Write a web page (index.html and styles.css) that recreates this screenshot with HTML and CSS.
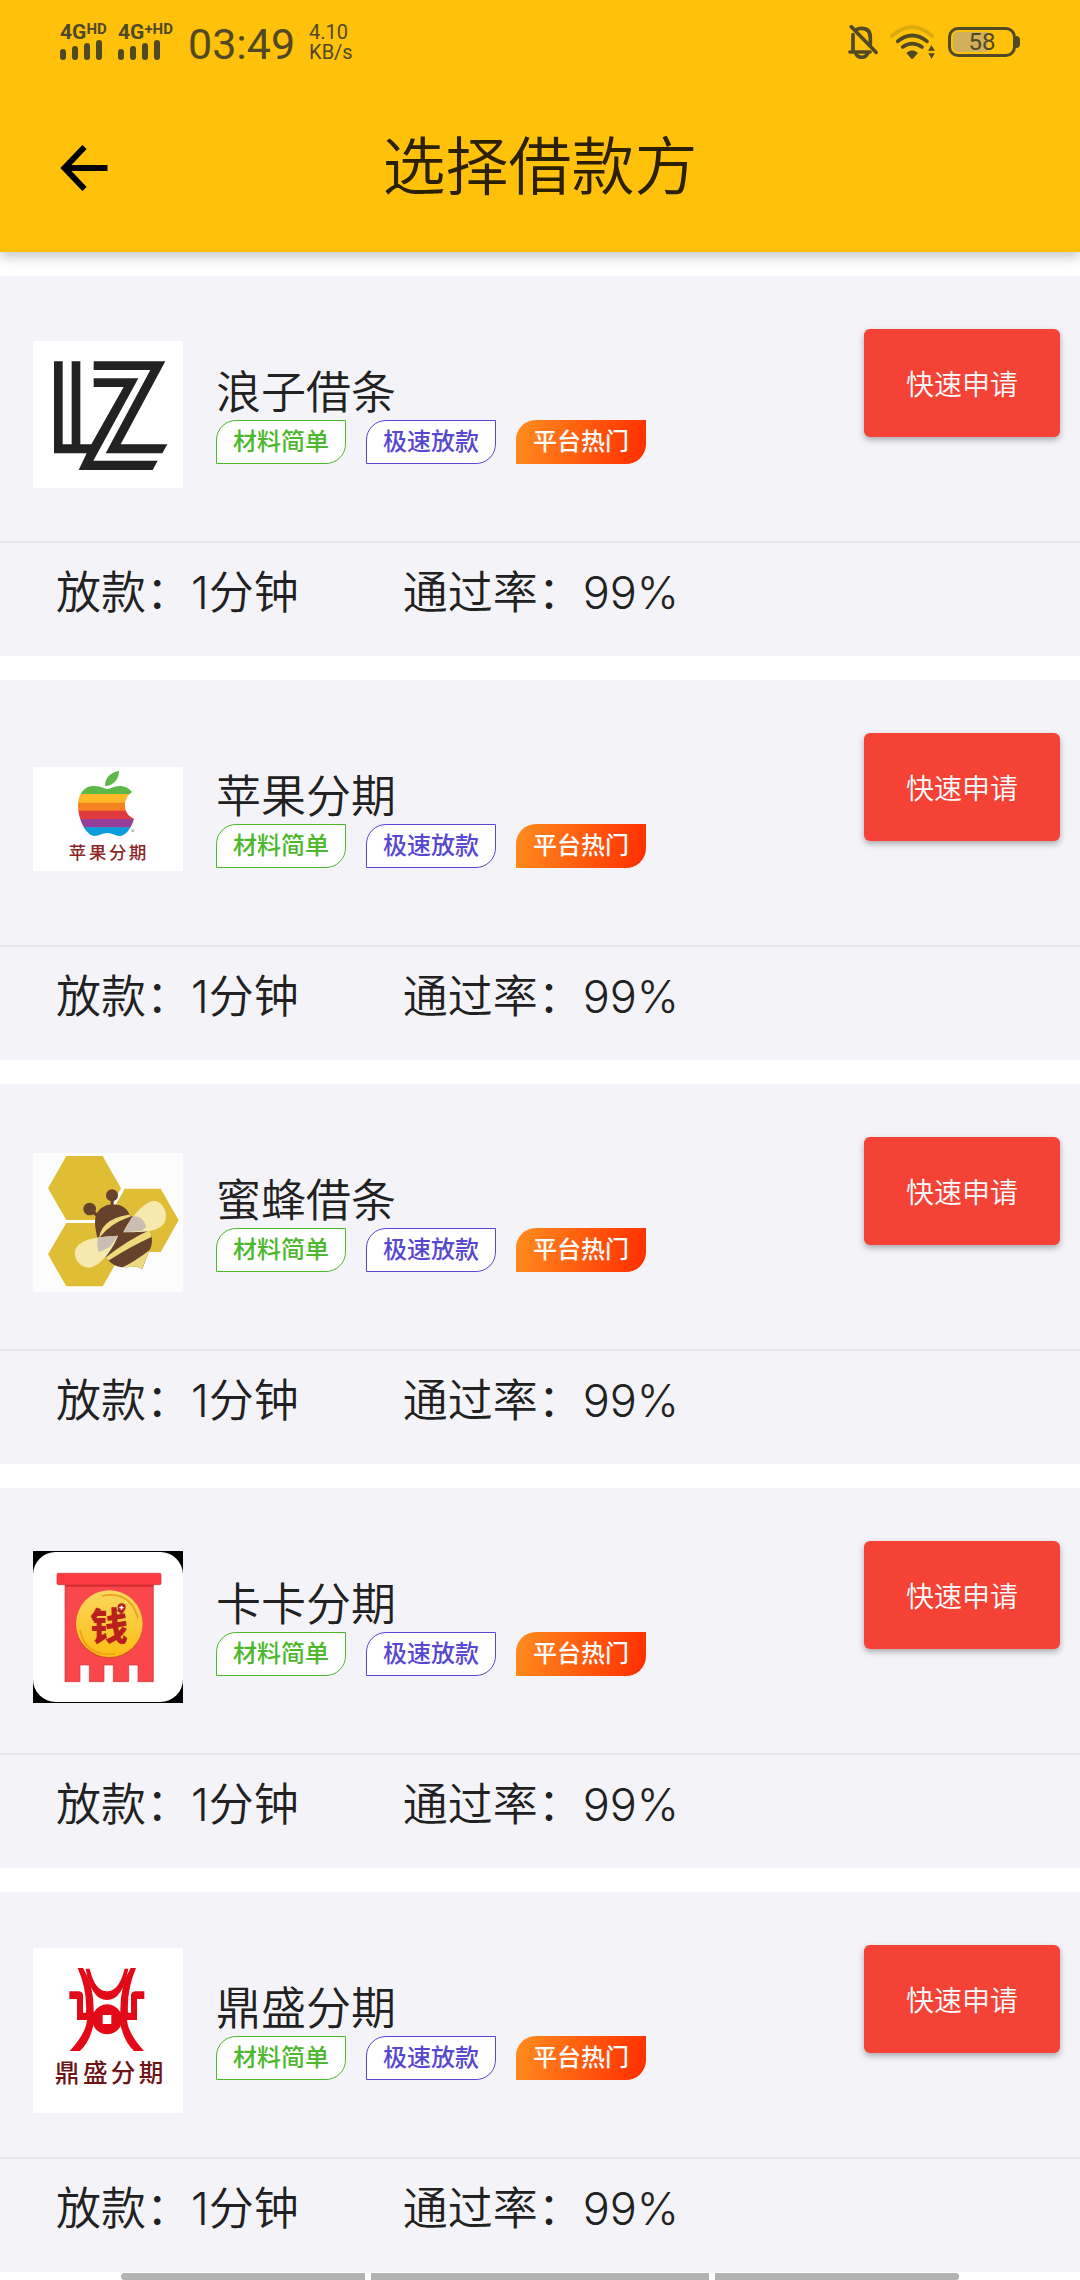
FILE: index.html
```html
<!DOCTYPE html>
<html lang="zh-CN">
  <head>
    <meta charset="UTF-8" />
    <meta name="viewport" content="width=device-width, initial-scale=1.0" />
    <title>选择借款方</title>
    <link rel="stylesheet" href="styles.css">
  </head>
  <body>
    <header class="header">
      <div class="status-bar">
        <div class="status-left">
          <div class="signal">
            <span class="network">4G<sup>HD</sup></span>
            <svg class="bars" viewBox="0 0 42 20"><path d="M3 12v5M15 9v8M27 6v11M39 3v14" /></svg>
          </div>
          <div class="signal">
            <span class="network">4G<sup>+HD</sup></span>
            <svg class="bars" viewBox="0 0 42 20"><path d="M3 12v5M15 9v8M27 6v11M39 3v14" /></svg>
          </div>
          <time class="clock">03:49</time>
          <div class="speed"><span>4.10</span><span>KB/s</span></div>
        </div>
        <div class="status-right">
          <svg class="icon-bell" viewBox="895 75 88 102" fill="none" stroke="#514824" stroke-width="11" stroke-linecap="round">
            <path d="M909 150v-46M917 90q8-5 18-5 26 0 26 28v20M900 156h60" />
            <path d="M918 162q5 10 17 10t17-10" />
            <path d="M904 80l74 77" />
          </svg>
          <svg class="icon-wifi" viewBox="1015 72 138 105" fill="none" stroke="#514824" stroke-width="11" stroke-linecap="round">
            <path d="M1021 105q60-53 120 0" opacity="0.2" />
            <path d="M1038 121q43-35 88 0M1053 138q28-20 58 0" />
            <path d="M1064 156q17-16 35 0l-15 17h-5z" fill="#514824" stroke="none" />
            <path d="M1129 149l10-16 11 16zM1130 157h19l-9 17z" fill="#514824" stroke="none" />
          </svg>
          <div class="battery"><span>58</span></div>
        </div>
      </div>
      <div class="app-bar">
        <a class="back" href="#" aria-label="返回">
          <svg viewBox="0 0 47 48"><path d="M24 3L4 24l20 21M4 24h43" /></svg>
        </a>
        <h1 class="title">选择借款方</h1>
      </div>
    </header>

    <main>
      <ul class="loan-list">
        <li class="loan">
          <div class="loan-main">
            <svg class="logo" viewBox="99 63 450 441">
              <path fill="#fff" d="M99 63h450v441H99z" />
              <g fill="#222">
                <path d="M162 124h26v249h27V124h26v249h33l97-172h-90v-26h134L280 422h193l-15 28H236l24-50h-98z" />
                <path d="M281 124h215L362 373h140l-15 27H317l134-250H281z" />
              </g>
            </svg>
            <div class="info">
              <h2 class="name">浪子借条</h2>
              <div class="tags">
                <span class="tag tag-green">材料简单</span>
                <span class="tag tag-purple">极速放款</span>
                <span class="tag tag-hot">平台热门</span>
              </div>
            </div>
            <button class="apply" type="button">快速申请</button>
          </div>
          <div class="stats"><span>放款：1分钟</span><span>通过率：99%</span></div>
        </li>

        <li class="loan">
          <div class="loan-main">
            <svg class="logo" viewBox="99 81 450 312">
              <clipPath id="apple">
                <path d="M320 147C303 141 292 137 278 138C250 140 234 165 234 196C234 238 258 288 284 288C299 288 305 279 322 279C338 279 345 288 358 288C378 288 395 262 402 236C385 230 375 215 375 196C375 178 384 165 396 156C386 143 372 138 358 138C343 138 332 147 320 147z" />
              </clipPath>
              <path fill="#fff" d="M99 81h450v312H99z" />
              <g clip-path="url(#apple)">
                <path fill="#5db947" d="M230 130h180v33H230z" />
                <path fill="#fdb827" d="M230 162h180v27H230z" />
                <path fill="#f58220" d="M230 188h180v25H230z" />
                <path fill="#e03a3e" d="M230 212h180v26H230z" />
                <path fill="#963d97" d="M230 237h180v26H230z" />
                <path fill="#0b9ddc" d="M230 262h180v28H230z" />
              </g>
              <path fill="#5db947" d="M357 93C334 96 314 113 315 138C340 138 358 116 357 93z" />
              <text class="logo-text" x="393" y="287" font-size="22" fill="#999">®</text>
              <text class="logo-text" x="206 267 327 387" y="358" font-size="52" fill="#8c2626">苹果分期</text>
            </svg>
            <div class="info">
              <h2 class="name">苹果分期</h2>
              <div class="tags">
                <span class="tag tag-green">材料简单</span>
                <span class="tag tag-purple">极速放款</span>
                <span class="tag tag-hot">平台热门</span>
              </div>
            </div>
            <button class="apply" type="button">快速申请</button>
          </div>
          <div class="stats"><span>放款：1分钟</span><span>通过率：99%</span></div>
        </li>

        <li class="loan">
          <div class="loan-main">
            <svg class="logo" viewBox="99 69 450 417">
              <clipPath id="bee">
                <path d="M285 275C285 240 312 223 340 223C365 223 382 235 390 257C425 262 456 295 456 330C456 345 452 355 447 364L427 417L412 410L365 412C335 408 315 385 295 345C292 315 285 300 285 275z" />
              </clipPath>
              <path fill="#fcfcfc" d="M99 69h450v417H99z" />
              <g fill="#dfbd35">
                <path d="M199 78h109l55 97-55 95H199l-55-95z" />
                <path d="M370 176h112l54 95-54 95H370l-54-95z" />
                <path d="M199 279h109l55 94-55 96H199l-55-96z" />
              </g>
              <path d="M370 176l-54 95" stroke="#fcfcfc" stroke-width="8" />
              <g fill="#66422d">
                <circle cx="336" cy="196" r="18" />
                <circle cx="269" cy="237" r="19" />
                <path d="M332 208h9v22h-9zM280 240l18 14-7 8-18-14z" />
              </g>
              <g clip-path="url(#bee)">
                <path fill="#66422d" d="M270 210h200v220H270z" />
                <path fill="#edda7c" d="M297 325Q305 258 410 252L386 262Q335 280 303 317z" />
                <path fill="#edda7c" d="M310 388Q380 330 460 295L456 320Q390 350 325 392z" />
                <path fill="#edda7c" d="M350 420Q400 400 462 350V430z" />
              </g>
              <path fill="#f5e9ae" d="M370 307C390 265 435 210 465 213C490 217 505 250 495 275C480 307 425 306 370 307z" />
              <path fill="#f5e9ae" d="M354 317C340 355 300 412 265 413C235 410 218 380 227 357C240 325 300 320 354 317z" />
              <path fill="#cbbdb4" d="M370 307L396 260Q425 252 439 290L425 303z" />
              <path fill="#cbbdb4" d="M354 317L295 322Q287 340 297 367L330 351z" />
            </svg>
            <div class="info">
              <h2 class="name">蜜蜂借条</h2>
              <div class="tags">
                <span class="tag tag-green">材料简单</span>
                <span class="tag tag-purple">极速放款</span>
                <span class="tag tag-hot">平台热门</span>
              </div>
            </div>
            <button class="apply" type="button">快速申请</button>
          </div>
          <div class="stats"><span>放款：1分钟</span><span>通过率：99%</span></div>
        </li>

        <li class="loan">
          <div class="loan-main">
            <svg class="logo" viewBox="99 63 450 456">
              <linearGradient id="coin" x1="0" y1="0" x2="0" y2="1">
                <stop offset="0" stop-color="#fbd75e" />
                <stop offset="1" stop-color="#fbbd12" />
              </linearGradient>
              <path d="M99 63h450v456H99z" />
              <rect x="99" y="66" width="450" height="450" rx="68" fill="#fff" />
              <path fill="#f9474b" stroke="#d93137" stroke-width="2" d="M195 160h265v295h-46v-50h-28v50h-46v-50h-28v50h-44v-50h-28v50h-45z" />
              <path fill="#d42a31" d="M195 164h265v6H195z" />
              <rect x="171" y="130" width="312" height="34" rx="4" fill="#fb3b40" stroke="#d93137" stroke-width="2" />
              <circle cx="328" cy="285" r="100" fill="#d5502a" />
              <circle cx="328" cy="281" r="100" fill="url(#coin)" />
              <path fill="none" stroke="#eea11b" stroke-width="5" d="M305 198Q390 180 414 265M240 300Q255 380 345 372" />
              <text class="logo-text coin-text" x="270" y="330" font-size="114" fill="#b91f1c">钱</text>
              <circle cx="365" cy="232" r="12" fill="#b91f1c" />
              <path fill="#fff" d="M362 227h5v4h4v4h-4v4h-5v-4h-4v-4h4z" />
            </svg>
            <div class="info">
              <h2 class="name">卡卡分期</h2>
              <div class="tags">
                <span class="tag tag-green">材料简单</span>
                <span class="tag tag-purple">极速放款</span>
                <span class="tag tag-hot">平台热门</span>
              </div>
            </div>
            <button class="apply" type="button">快速申请</button>
          </div>
          <div class="stats"><span>放款：1分钟</span><span>通过率：99%</span></div>
        </li>

        <li class="loan">
          <div class="loan-main">
            <svg class="logo" viewBox="99 54 450 495">
              <path fill="#fff" d="M99 54h450v495H99z" />
              <g fill="#e20a17">
                <path d="M233 114h16Q282 165 281 245L285 262Q275 330 240 363H209Q258 310 261 270H231V207H208V184H237Q249 185 249 198V248H258Q262 180 233 114z" />
                <path d="M408 114h-16Q360 165 361 245L357 262Q367 330 402 363H432Q384 310 381 270H411V207H433V184H405Q393 185 393 198V248H384Q380 180 408 114z" />
                <path d="M257 116h12Q285 184 321 184T374 116h11Q368 210 321 210T257 116z" />
                <path fill-rule="evenodd" d="M321 223a45 45 0 1 0 1 0zM308 255h26v27h-26z" />
              </g>
              <text class="logo-text" x="164 249 332 416" y="455" font-size="74" fill="#6e1517">鼎盛分期</text>
            </svg>
            <div class="info">
              <h2 class="name">鼎盛分期</h2>
              <div class="tags">
                <span class="tag tag-green">材料简单</span>
                <span class="tag tag-purple">极速放款</span>
                <span class="tag tag-hot">平台热门</span>
              </div>
            </div>
            <button class="apply" type="button">快速申请</button>
          </div>
          <div class="stats"><span>放款：1分钟</span><span>通过率：99%</span></div>
        </li>
      </ul>
    </main>

    <div class="gesture-bar"><i></i><i class="wide"></i><i></i></div>
  </body>
</html>
```
FILE: styles.css
```css
* {
  margin: 0;
  padding: 0;
  box-sizing: border-box;
}

body {
  font-family: Inter, "Noto Sans CJK SC", sans-serif;
  font-weight: 350;
  color: #212121;
  background: #fff;
}

/* Header */
.header {
  position: relative;
  background: #ffc10a;
  box-shadow: 0 4px 12px rgba(0, 0, 0, 0.25);
}

.status-bar {
  display: flex;
  justify-content: space-between;
  align-items: center;
  height: 84px;
  padding: 0 60px;
  font-family: Roboto, sans-serif;
  font-weight: 400;
  color: #514824;
}

.status-left,
.status-right {
  display: flex;
  align-items: center;
}

.signal {
  width: 58px;
}

.network {
  display: flex;
  align-items: flex-start;
  height: 16px;
  font-size: 21px;
  font-weight: 700;
  line-height: 16px;
}

.network sup {
  font-size: 15px;
  line-height: 10px;
}

.bars {
  display: block;
  width: 42px;
  height: 20px;
  fill: none;
  stroke: #514824;
  stroke-width: 6;
  stroke-linecap: round;
}

.clock {
  margin: 4px 14px 0 12px;
  font-size: 43px;
  line-height: 48px;
}

.speed {
  display: flex;
  flex-direction: column;
  font-size: 20px;
  line-height: 20px;
}

.icon-bell {
  width: 30px;
  height: 34px;
  margin-right: 12px;
}

.icon-wifi {
  width: 46px;
  height: 35px;
  margin-right: 12px;
}

.battery {
  position: relative;
  width: 68px;
  height: 30px;
  border: 3px solid #514824;
  border-radius: 10px;
  background: linear-gradient(90deg, #d2b05a 60%, transparent 60%);
  background-clip: content-box;
  padding: 2px;
  margin-right: 4px;
  font-size: 24px;
  line-height: 20px;
  text-align: center;
}

.battery::after {
  content: "";
  position: absolute;
  top: 6px;
  right: -7px;
  width: 4px;
  height: 12px;
  border-radius: 0 4px 4px 0;
  background: #514824;
}

.app-bar {
  display: flex;
  align-items: center;
  height: 168px;
  padding: 0 108px 0 60px;
}

.back svg {
  display: block;
  width: 48px;
  height: 48px;
  fill: none;
  stroke: #000;
  stroke-width: 6;
}

.title {
  flex: 1;
  padding-bottom: 4px;
  font-size: 63px;
  font-weight: 350;
  line-height: 84px;
  text-align: center;
  color: #2b2100;
}

/* Loan cards */
.loan-list {
  display: flex;
  flex-direction: column;
  gap: 24px;
  padding-top: 24px;
  list-style: none;
}

.loan {
  background: #f4f3f8;
}

.loan-main {
  display: flex;
  align-items: center;
  height: 267px;
  padding: 12px 20px 0 33px;
  border-bottom: 2px solid #e4e3e8;
}

.logo {
  width: 150px;
  flex: none;
}

.logo-text {
  font-family: "Noto Sans CJK SC", sans-serif;
  font-weight: 500;
}

.coin-text {
  font-weight: 900;
}

.info {
  flex: 1;
  margin-left: 33px;
}

.name {
  font-size: 45px;
  font-weight: 350;
  line-height: 54px;
}

.tags {
  display: flex;
  gap: 20px;
}

.tag {
  width: 130px;
  height: 44px;
  border: 1px solid;
  border-radius: 20px 0;
  background: #fff;
  font-size: 24px;
  font-weight: 500;
  line-height: 42px;
  text-align: center;
}

.tag-green {
  color: #4cb82b;
}

.tag-purple {
  color: #5747d1;
}

.tag-hot {
  border: none;
  background: linear-gradient(100deg, #ff8d1e, #ff2d00);
  line-height: 44px;
  color: #fff;
}

.apply {
  align-self: flex-start;
  width: 196px;
  height: 108px;
  margin-top: 41px;
  border: none;
  border-radius: 6px;
  background: #f44336;
  box-shadow: 0 3px 6px rgba(0, 0, 0, 0.3);
  font-family: inherit;
  font-size: 28px;
  font-weight: 350;
  color: #fff;
}

.stats {
  display: flex;
  gap: 104px;
  height: 113px;
  padding: 15px 56px 0;
  font-size: 45px;
  line-height: 70px;
}

/* Bottom gesture hints */
.gesture-bar {
  display: flex;
  gap: 6px;
  height: 8px;
  padding: 1px 121px 0;
}

.gesture-bar i {
  flex: 244;
  background: #b3b3b3;
}

.gesture-bar i:first-child {
  border-radius: 4px 0 0 4px;
}

.gesture-bar i:last-child {
  border-radius: 0 4px 4px 0;
}

.gesture-bar .wide {
  flex: 338;
}
```
